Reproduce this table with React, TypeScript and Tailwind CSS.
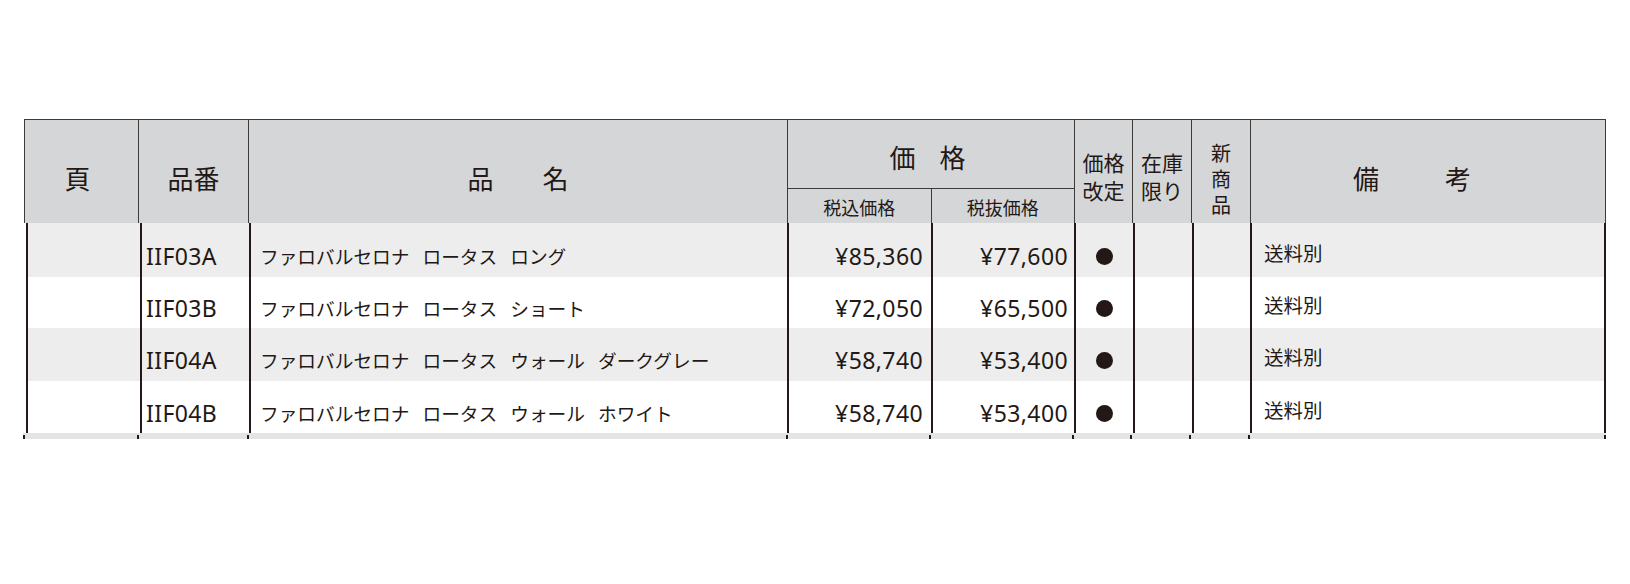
const rows = [
  { code: "IIF03A", name: ["ファロバルセロナ", "ロータス", "ロング"], inc: "¥85,360", exc: "¥77,600", h: "h-[54px]", bg: "bg-[#ededed]" },
  { code: "IIF03B", name: ["ファロバルセロナ", "ロータス", "ショート"], inc: "¥72,050", exc: "¥65,500", h: "h-[51px]", bg: "bg-white" },
  { code: "IIF04A", name: ["ファロバルセロナ", "ロータス", "ウォール", "ダークグレー"], inc: "¥58,740", exc: "¥53,400", h: "h-[53px]", bg: "bg-[#ededed]" },
  { code: "IIF04B", name: ["ファロバルセロナ", "ロータス", "ウォール", "ホワイト"], inc: "¥58,740", exc: "¥53,400", h: "h-[52px]", bg: "bg-white" },
];

const stripCols = ["w-[114px]", "w-[110px]", "w-[539px]", "w-[144px]", "w-[143px]", "w-[58px]", "w-[59px]", "w-[59px]", "w-[356px]"];

function Header() {
  return (
    <div className="flex h-[104px] border-t border-[#3e3a39] bg-[#d5d6d8]">
      <div className="w-[114px] border-l border-[#3e3a39] flex items-center justify-center pr-[8px] pt-[11px] text-[26px]">頁</div>
      <div className="w-[110px] border-l border-[#3e3a39] flex items-center justify-center pt-[11px] text-[26px]">品番</div>
      <div className="w-[539px] border-l border-[#3e3a39] flex items-center justify-center gap-[49px] pt-[11px] text-[26px]">
        <span>品</span>
        <span>名</span>
      </div>
      <div className="w-[287px] border-l border-[#3e3a39] flex flex-col">
        <div className="h-[69px] border-b border-[#3e3a39] flex items-center justify-center gap-[24px] pr-[7px] pt-[4px] text-[26px]">
          <span>価</span>
          <span>格</span>
        </div>
        <div className="flex flex-1">
          <div className="w-[143px] flex items-center justify-center pt-[3px] text-[18px]">税込価格</div>
          <div className="w-[144px] border-l border-[#3e3a39] flex items-center justify-center pt-[3px] text-[18px]">税抜価格</div>
        </div>
      </div>
      <div className="w-[58px] border-l border-[#3e3a39] flex items-center justify-center pt-[8px] text-[21px] leading-[28px] text-center">
        価格<br />改定
      </div>
      <div className="w-[59px] border-l border-[#3e3a39] flex items-center justify-center pt-[8px] text-[21px] leading-[28px] text-center">
        在庫<br />限り
      </div>
      <div className="w-[59px] border-l border-[#3e3a39] flex items-center justify-center pt-[14px] text-[20px] leading-[26px] text-center">
        新<br />商<br />品
      </div>
      <div className="w-[356px] border-x border-[#3e3a39] flex items-center justify-center gap-[66px] pr-[32px] pt-[11px] text-[26px]">
        <span>備</span>
        <span>考</span>
      </div>
    </div>
  );
}

function Row({ r }: { r: (typeof rows)[number] }) {
  const latin = "font-['Noto_Sans','Noto_Sans_CJK_JP',sans-serif] text-[23px] tracking-[0.4px]";
  return (
    <div className={`flex ${r.h} ${r.bg}`}>
      <div className="w-[114px] border-l-2 border-[#231815]" />
      <div className={`w-[109px] border-l-2 border-[#231815] flex items-center pl-[4px] pt-[12px] ${latin}`}>{r.code}</div>
      <div className="w-[538px] border-l-2 border-[#231815] flex items-center gap-[13px] pl-[9px] pt-[12px] text-[18.7px]">
        {r.name.map((w, i) => (
          <span key={i}>{w}</span>
        ))}
      </div>
      <div className={`w-[144px] border-l-2 border-[#231815] flex items-center justify-end pr-[8px] pt-[12px] ${latin}`}>{r.inc}</div>
      <div className={`w-[143px] border-l-2 border-[#231815] flex items-center justify-end pr-[6px] pt-[12px] ${latin}`}>{r.exc}</div>
      <div className="w-[59px] border-l-2 border-[#231815] flex items-center justify-center pt-[12px]">
        <div className="w-[17px] h-[17px] rounded-full bg-[#231815]" />
      </div>
      <div className="w-[59px] border-l-2 border-[#231815]" />
      <div className="w-[58px] border-l-2 border-[#231815]" />
      <div className="w-[356px] border-x-2 border-[#231815] flex items-center pl-[12px] pt-[5px] text-[19.5px]">送料別</div>
    </div>
  );
}

export default function App() {
  return (
    <div className="w-[1630px] h-[584px] bg-white pt-[119px] pl-[24px] text-[#231815] font-['Noto_Sans_CJK_JP',sans-serif]">
      <div className="w-[1582px]">
        <Header />
        <div className="ml-[2px]">
          {rows.map((r) => (
            <Row key={r.code} r={r} />
          ))}
        </div>
        <div className="flex h-[6px] -ml-[1px] bg-[#e4e4e4]">
          {stripCols.map((w, i) => (
            <div key={i} className={`${w} flex items-end`}>
              <div className="w-[2px] h-[4px] bg-[#231815]" />
            </div>
          ))}
          <div className="flex items-end">
            <div className="w-[2px] h-[4px] bg-[#231815]" />
          </div>
        </div>
      </div>
    </div>
  );
}
